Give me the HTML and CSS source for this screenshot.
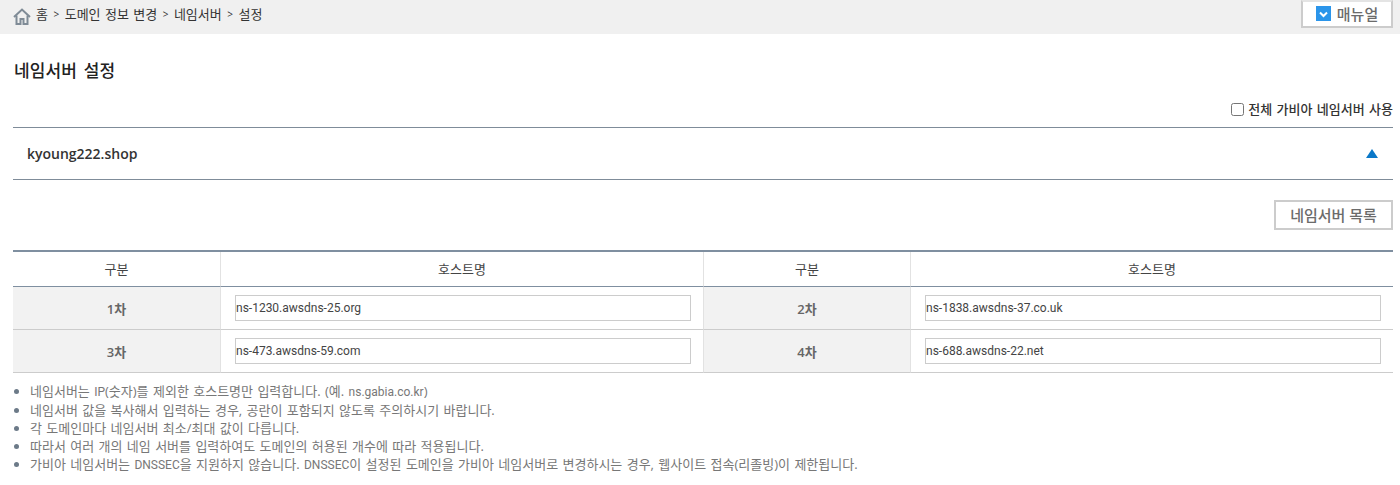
FILE: index.html
```html
<!DOCTYPE html>
<html lang="ko">
<head>
<meta charset="utf-8">
<title>네임서버 설정</title>
<link rel="stylesheet" href="styles.css">
</head>
<body>
<header class="topbar">
  <nav class="crumbs">
    <svg class="home" width="18" height="17" viewBox="0 0 18 17" fill="none" stroke="#7f8b96" stroke-width="2"><path d="M1 9 9 1.500 17 9"/><path d="M3.500 7.500V16h4v-5h3v5h4V7.500"/></svg>
    <span>홈</span><i>&gt;</i><span>도메인 정보 변경</span><i>&gt;</i><span>네임서버</span><i>&gt;</i><span>설정</span>
  </nav>
  <button class="manual" type="button">
    <svg width="15" height="15" viewBox="0 0 15 15"><rect width="15" height="15" fill="#2b95ea"/><path d="M4 6.500 7.500 10 11 6.500" fill="none" stroke="#fff" stroke-width="2"/></svg>
    매뉴얼
  </button>
</header>
<main class="content">
  <h1 class="title">네임서버 설정</h1>
  <div class="useall"><label class="check"><span class="box"></span>전체 가비아 네임서버 사용</label></div>
  <div class="domain"><strong>kyoung222.shop</strong><span class="arrow"></span></div>
  <div class="actions"><button class="listbtn" type="button">네임서버 목록</button></div>
  <div class="grid">
    <div class="th">구분</div><div class="th">호스트명</div><div class="th">구분</div><div class="th last">호스트명</div>
    <div class="lab">1차</div><div class="val"><input class="inp" value="ns-1230.awsdns-25.org"></div>
    <div class="lab">2차</div><div class="val last"><input class="inp" value="ns-1838.awsdns-37.co.uk"></div>
    <div class="lab">3차</div><div class="val"><input class="inp" value="ns-473.awsdns-59.com"></div>
    <div class="lab">4차</div><div class="val last"><input class="inp" value="ns-688.awsdns-22.net"></div>
  </div>
  <ul class="notes">
    <li>네임서버는 <span class="en">IP</span>(숫자)를 제외한 호스트명만 입력합니다. (예. <span class="en">ns.gabia.co.kr</span>)</li>
    <li>네임서버 값을 복사해서 입력하는 경우, 공란이 포함되지 않도록 주의하시기 바랍니다.</li>
    <li>각 도메인마다 네임서버 최소/최대 값이 다릅니다.</li>
    <li>따라서 여러 개의 네임 서버를 입력하여도 도메인의 허용된 개수에 따라 적용됩니다.</li>
    <li>가비아 네임서버는 <span class="en">DNSSEC</span>을 지원하지 않습니다. <span class="en">DNSSEC</span>이 설정된 도메인을 가비아 네임서버로 변경하시는 경우, 웹사이트 접속(리졸빙)이 제한됩니다.</li>
  </ul>
  <div class="footer"><span class="cutbtn"></span></div>
</main>
</body>
</html>
```
FILE: styles.css
```css
* { box-sizing: border-box; }
html, body { margin: 0; height: 485px; overflow: hidden; background: #fff; }
body { font-family: "Open Sans", "Noto Sans CJK KR", sans-serif; font-size: 13px; word-spacing: 1px; color: #333; }
.topbar { height: 34px; background: #f0f0f0; display: flex; justify-content: space-between; align-items: flex-start; padding: 0 7px 0 13px; }
.crumbs { display: flex; align-items: center; height: 27px; color: #333; }
.crumbs .home { margin-right: 5px; margin-top: 5px; }
.crumbs i { font-style: normal; font-size: 10px; margin: 0 5.500px; }
.manual { width: 92px; height: 28px; background: #fff; border: 2px solid #ccc; border-top-color: #e4e4e4; display: flex; align-items: center; justify-content: center; gap: 6px; font: inherit; font-size: 15px; font-weight: 500; color: #6b6b6b; padding: 0 0 2px; }
.content { padding: 0 7px 0 13px; }
.title { margin: 0; padding: 26px 0 0 1px; height: 66px; font-size: 17px; font-weight: 500; line-height: 22px; color: #222; word-spacing: 2px; letter-spacing: .15px; }
.useall { height: 27px; display: flex; justify-content: flex-end; align-items: flex-start; }
.check { display: flex; align-items: center; gap: 4px; font-weight: 500; color: #333; line-height: 18px; }
.box { width: 13px; height: 13px; border: 1px solid #767676; border-radius: 2.500px; background: #fff; }
.domain { height: 53px; border-top: 1px solid #7f8c99; border-bottom: 1px solid #7f8c99; display: flex; justify-content: space-between; align-items: center; padding: 0 15px 0 14px; }
.domain strong { font-size: 14px; font-weight: 600; color: #333; }
.arrow { width: 0; height: 0; border-left: 6px solid transparent; border-right: 6px solid transparent; border-bottom: 9px solid #0a78c8; }
.actions { height: 70px; padding-top: 20px; display: flex; justify-content: flex-end; align-items: flex-start; }
.listbtn { width: 119px; height: 30px; background: #fff; border: 2px solid #ccc; font: inherit; font-size: 15px; font-weight: 500; color: #6b6b6b; padding: 0 0 1px; }
.grid { display: grid; grid-template-columns: 208px 483px 207px 1fr; grid-template-rows: 35px 43px 43px; border-top: 2px solid #7f8fa0; height: 123px; }
.th { display: flex; align-items: center; justify-content: center; border-right: 1px solid #e2e2e2; border-bottom: 1px solid #7f8fa0; color: #444; padding-bottom: 2px; }
.th.last, .val.last { border-right: 0; }
.lab { display: flex; align-items: center; justify-content: center; background: #f2f2f2; border-right: 1px solid #e2e2e2; border-bottom: 1px solid #ccc; font-weight: 600; color: #666; }
.val { display: flex; align-items: center; padding: 0 12px 0 14px; border-right: 1px solid #e2e2e2; border-bottom: 1px solid #ccc; }
.inp { width: 100%; height: 26px; border: 1px solid #ccc; padding: 0; font-family: Roboto, sans-serif; font-size: 12px; word-spacing: 0; color: #444; background: #fff; outline: 0; }
.notes { margin: 0; padding: 9px 0 0 17px; color: #777; line-height: 18px; }
.notes li::marker { color: #6c7a88; }
.en { font-family: Roboto, sans-serif; font-size: 12px; }
.footer { display: flex; justify-content: flex-end; padding-top: 11px; }
.cutbtn { width: 73px; height: 20px; border-top: 2px solid #ccc; }
```
